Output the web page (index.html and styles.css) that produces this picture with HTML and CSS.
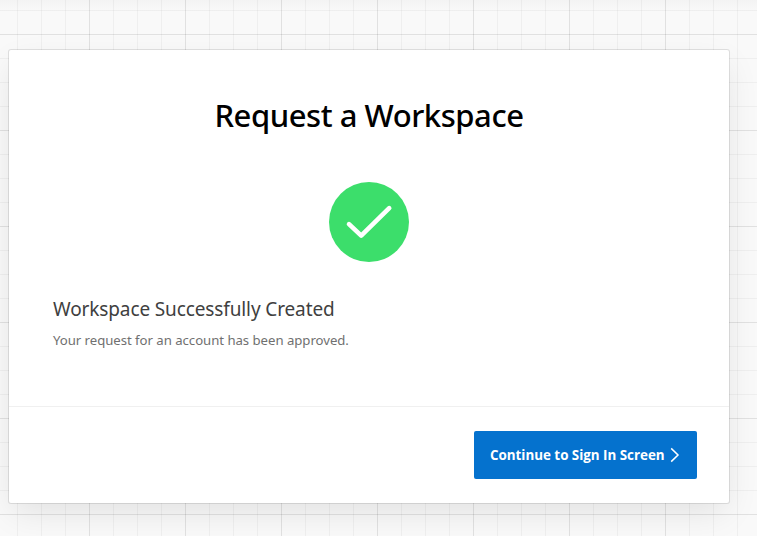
FILE: index.html
```html
<!DOCTYPE html>
<html lang="en">
<head>
<meta charset="utf-8">
<title>Request a Workspace</title>
<link rel="stylesheet" href="styles.css">
</head>
<body>
<main class="card">
  <section class="content">
    <h1 class="title"><span>Request a Workspace</span></h1>
    <svg class="status" viewBox="0 0 80 80" aria-hidden="true">
      <circle cx="40" cy="40" r="40" fill="#3cde6b"/>
      <path d="M20 42.2 32.2 53.7 60.2 26.2" fill="none" stroke="#fff" stroke-width="4.6" stroke-linecap="round" stroke-linejoin="round"/>
    </svg>
    <h2 class="subtitle"><span>Workspace Successfully Created</span></h2>
    <p class="message"><span>Your request for an account has been approved.</span></p>
  </section>
  <footer class="actions">
    <button class="button" type="button">
      <span class="label">Continue to Sign In Screen</span>
      <svg class="chevron" viewBox="0 0 10 16" aria-hidden="true"><path d="M1.2 1.4 8 8 1.2 14.6" fill="none" stroke="#fff" stroke-width="1.5"/></svg>
    </button>
  </footer>
</main>
</body>
</html>
```
FILE: styles.css
```css
* { box-sizing: border-box; }

body {
  margin: 0;
  height: 536px;
  padding: 50px 0 0 9px;
  overflow: hidden;
  font-family: "Noto Sans", "Open Sans", sans-serif;
  background-color: #f9f9f9;
  background-image:
    linear-gradient(rgba(0, 0, 0, .025), transparent 12px),
    linear-gradient(90deg, rgba(0, 0, 0, .06) 1px, transparent 1px),
    linear-gradient(rgba(0, 0, 0, .06) 1px, transparent 1px),
    linear-gradient(90deg, rgba(0, 0, 0, .04) 1px, transparent 1px),
    linear-gradient(rgba(0, 0, 0, .04) 1px, transparent 1px);
  background-size: auto, 96px 96px, 96px 96px, 24px 24px, 24px 24px;
  background-position: 0 0, 89px 34px, 89px 34px, 17px 10px, 17px 10px;
}

.card {
  width: 720px;
  height: 453px;
  display: flex;
  flex-direction: column;
  background: #fff;
  border-radius: 2px;
  box-shadow: 0 0 0 1px rgba(0, 0, 0, .1), 0 12px 32px -4px rgba(0, 0, 0, .1);
}

.content {
  flex: 1;
  padding: 43px 44px 0;
}

.title, .subtitle, .message { margin: 0; white-space: nowrap; }

.title {
  color: #000;
  font-size: 31px;
  font-weight: 500;
  line-height: 44px;
  letter-spacing: -.45px;
  text-align: center;
}

.status {
  display: block;
  width: 80px;
  height: 80px;
  margin: 45px auto 32px;
}

.subtitle {
  color: #404040;
  font-size: 19px;
  font-weight: 400;
  line-height: 30px;
  letter-spacing: -.12px;
}

.message {
  margin-top: 6px;
  color: #707070;
  font-size: 13.2px;
  line-height: 20px;
  letter-spacing: -.04px;
}

.actions {
  display: flex;
  justify-content: flex-end;
  height: 97px;
  padding: 24px 32px;
  border-top: 1px solid #f0f0f0;
}

.button {
  display: flex;
  align-items: center;
  justify-content: space-between;
  width: 223px;
  height: 48px;
  padding: 0 17px 0 16px;
  border: 0;
  border-radius: 2px;
  background: #0572ce;
  color: #fff;
  font: 700 13.4px/20px "Open Sans", "Noto Sans", sans-serif;
  letter-spacing: -.02px;
  white-space: nowrap;
}

.chevron { width: 10px; height: 16px; }
```
